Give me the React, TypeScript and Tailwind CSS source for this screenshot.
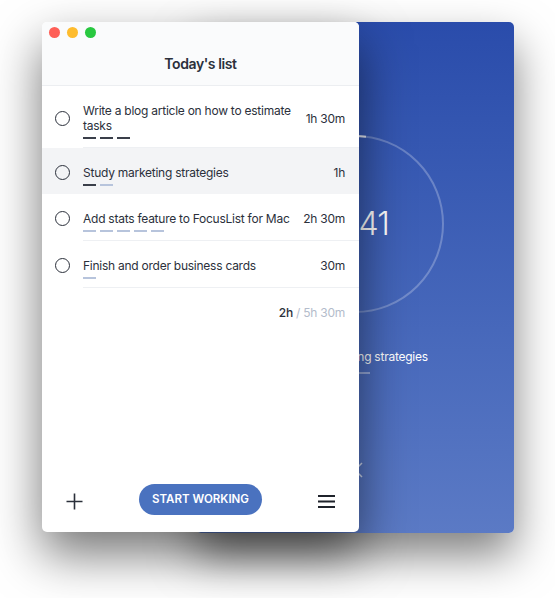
import React from 'react';

type Dash = 'dark' | 'light';

interface Task {
  id: number;
  title: string;
  time: string;
  lines: 1 | 2;
  dashes: Dash[];
  active?: boolean;
}

const tasks: Task[] = [
  { id: 1, title: 'Write a blog article on how to estimate tasks', time: '1h 30m', lines: 2, dashes: ['dark', 'dark', 'dark'] },
  { id: 2, title: 'Study marketing strategies', time: '1h', lines: 1, dashes: ['dark', 'light'], active: true },
  { id: 3, title: 'Add stats feature to FocusList for Mac', time: '2h 30m', lines: 1, dashes: ['light', 'light', 'light', 'light', 'light'] },
  { id: 4, title: 'Finish and order business cards', time: '30m', lines: 1, dashes: ['light'] },
];

const TaskRow: React.FC<{ task: Task }> = ({ task }) => (
  <div className={`flex ${task.active ? 'bg-[#f3f4f6]' : ''}`}>
    {/* check circle */}
    <div className="w-[41px] shrink-0 pl-[13px] pt-[17px]">
      <div className={`flex items-center ${task.lines === 2 ? 'h-[30px]' : 'h-[15px]'}`}>
        <div className="h-[15px] w-[15px] rounded-full border-[1.5px] border-[#2b303b]" />
      </div>
    </div>

    <div className={`min-w-0 flex-1 pr-[14px] ${task.active ? '' : 'border-b border-[#eef0f3]'}`}>
      <div className="flex items-center gap-[6px] pt-[17px] text-[12px] leading-[15px] tracking-[-0.25px] text-[#2b303b]">
        <div className="min-w-0 flex-1">{task.title}</div>
        <div className="shrink-0 whitespace-nowrap">{task.time}</div>
      </div>
      <div className="mt-[4px] flex gap-[4px] pb-[8px]">
        {task.dashes.map((d, i) => (
          <div
            key={i}
            className={`h-[2px] w-[13px] ${d === 'dark' ? 'bg-[#3a3f4a]' : 'bg-[#b7c4dc]'}`}
          />
        ))}
      </div>
    </div>
  </div>
);

const App: React.FC = () => {
  return (
    <div
      className="relative h-[598px] w-[555px] overflow-hidden bg-white"
      style={{ fontFamily: 'Inter, "Noto Sans", sans-serif' }}
    >
      {/* timer window, behind */}
      <div className="absolute left-[196px] top-[22px] flex h-[511px] w-[318px] flex-col items-center rounded-[5px] bg-gradient-to-b from-[#2a4cab] to-[#5b7ac5] shadow-[0_22px_45px_rgba(0,0,0,0.5)]">
        <div className="relative mt-[113px] flex h-[178px] w-[178px] items-center justify-center">
          <svg className="absolute inset-0" width="178" height="178" viewBox="0 0 178 178">
            <circle cx="89" cy="89" r="88" fill="none" stroke="rgba(255,255,255,0.25)" strokeWidth="2" />
            <path d="M89 1 A88 88 0 0 1 100 1.7" fill="none" stroke="rgba(255,255,255,0.85)" strokeWidth="2" />
          </svg>
          <span className="mr-[8px] text-[32px] font-light leading-none tracking-[-1px] text-white">24:41</span>
        </div>
        <div className="mt-[36px] text-[12px] leading-[16px] tracking-[-0.25px] text-white">Study marketing strategies</div>
        <div className="mt-[7px] flex gap-[4px]">
          <div className="h-[2px] w-[13px] bg-white/80" />
          <div className="h-[2px] w-[13px] bg-white/40" />
        </div>
        <svg className="mt-[86px]" width="20" height="20" viewBox="0 0 20 20">
          <path d="M3 3 L17 17 M17 3 L3 17" stroke="rgba(255,255,255,0.7)" strokeWidth="1.5" />
        </svg>
      </div>

      {/* list window, front */}
      <div className="absolute left-[42px] top-[22px] flex h-[510px] w-[317px] flex-col overflow-hidden rounded-[5px] bg-white shadow-[0_22px_50px_rgba(0,0,0,0.55)]">
        <div className="h-[64px] shrink-0 border-b border-[#eceef1] bg-[#fafbfc]">
          <div className="flex gap-[7px] pl-[7px] pt-[5px]">
            <div className="h-[11px] w-[11px] rounded-full bg-[#fe5f57]" />
            <div className="h-[11px] w-[11px] rounded-full bg-[#febc2e]" />
            <div className="h-[11px] w-[11px] rounded-full bg-[#28c840]" />
          </div>
          <div className="mt-[17px] text-center text-[14px] font-semibold leading-[18px] tracking-[-0.4px] text-[#2b303b]">
            Today's list
          </div>
        </div>

        <div className="flex-1">
          {tasks.map((t) => (
            <TaskRow key={t.id} task={t} />
          ))}
          <div className="pr-[14px] pt-[17px] text-right text-[12px] leading-[15px] tracking-[-0.25px]">
            <span className="font-medium text-[#2b303b]">2h</span>
            <span className="text-[#b3bccb]"> / 5h 30m</span>
          </div>
        </div>

        <div className="flex h-[48px] shrink-0 items-start justify-between px-[24px]">
          <svg className="mt-[9px]" width="17" height="17" viewBox="0 0 17 17">
            <path d="M8.5 0.5 V16.5 M0.5 8.5 H16.5" stroke="#2b303b" strokeWidth="1.6" />
          </svg>
          <button className="h-[31px] w-[123px] rounded-full bg-[#4a72bf] text-[11.5px] font-semibold text-white">
            START WORKING
          </button>
          <svg className="mt-[11px]" width="17" height="13" viewBox="0 0 17 13">
            <path d="M0 1 H17 M0 6.5 H17 M0 12 H17" stroke="#1f232b" strokeWidth="2" />
          </svg>
        </div>
      </div>
    </div>
  );
};

export default App;
